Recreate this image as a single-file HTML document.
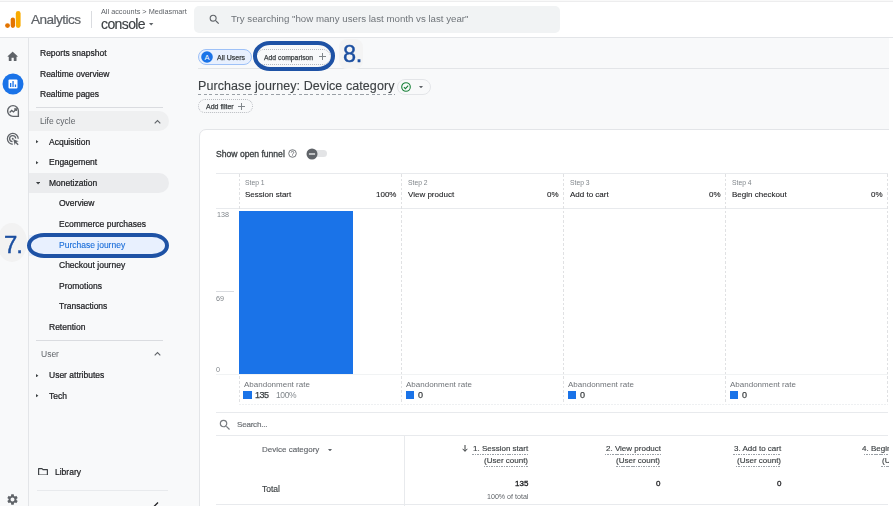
<!DOCTYPE html>
<html><head><meta charset="utf-8"><style>
html,body{margin:0;padding:0;width:893px;height:506px;overflow:hidden;background:#f8f9fa;font-family:"Liberation Sans",sans-serif;position:relative}
.t{position:absolute;white-space:nowrap;line-height:1;will-change:transform}
</style></head><body>
<div style="position:absolute;left:0px;top:0px;width:893px;height:1px;background:#f9f9f9"></div>
<div style="position:absolute;left:0px;top:1px;width:893px;height:1px;background:#ededee"></div>
<div style="position:absolute;left:0px;top:2px;width:893px;height:35px;background:#fff"></div>
<div style="position:absolute;left:0px;top:37px;width:893px;height:1px;background:#e3e5e8"></div>
<svg style="position:absolute;left:4px;top:10px" width="18" height="20" viewBox="0 0 18 20">
<circle cx="3.5" cy="15.6" r="2.4" fill="#e37400"/>
<rect x="6.7" y="7.4" width="4.3" height="10.6" rx="2.15" fill="#e37400"/>
<rect x="11.8" y="1" width="4.8" height="17" rx="2.4" fill="#f9ab00"/>
</svg>
<div class="t" style="left:31.20px;top:13.08px;font-size:13.6px;color:#5f6368;font-weight:400;letter-spacing:-0.55px;;-webkit-text-stroke:0.2px #5f6368">Analytics</div>
<div style="position:absolute;left:91px;top:11px;width:1px;height:17px;background:#dadce0"></div>
<div class="t" style="left:101.00px;top:8.32px;font-size:7.3px;color:#5f6368;font-weight:400;letter-spacing:0px;">All accounts &gt; Mediasmart</div>
<div class="t" style="left:101.00px;top:16.95px;font-size:14px;color:#3c4043;font-weight:400;letter-spacing:-0.6px;;-webkit-text-stroke:0.15px #3c4043">console</div>
<svg style="position:absolute;left:149.3px;top:23px" width="4.4" height="2.6" viewBox="0 0 6 3.5"><path d="M0 0h6L3 3.5z" fill="#5f6368"/></svg>
<div style="position:absolute;left:194px;top:6px;width:366px;height:27px;background:#f1f3f4;border-radius:5px"></div>
<svg style="position:absolute;left:208px;top:13px" width="13" height="13" viewBox="0 0 24 24">
<path d="M15.5 14h-.79l-.28-.27A6.47 6.47 0 0 0 16 9.5 6.5 6.5 0 1 0 9.5 16c1.61 0 3.09-.59 4.23-1.57l.27.28v.79l5 4.99L20.49 19l-4.99-5zm-6 0C7.01 14 5 11.99 5 9.5S7.01 5 9.5 5 14 7.01 14 9.5 11.99 14 9.5 14z" fill="#5f6368"/></svg>
<div class="t" style="left:231.00px;top:14.19px;font-size:9.7px;color:#6f7479;font-weight:400;letter-spacing:0px;">Try searching "how many users last month vs last year"</div>
<div style="position:absolute;left:28px;top:38px;width:1px;height:468px;background:#e3e5e8"></div>
<svg style="position:absolute;left:6.05px;top:50.1px" width="13.3" height="13.3" viewBox="0 0 24 24"><path d="M10 19v-5h4v5c0 .55.45 1 1 1h3c.55 0 1-.45 1-1v-7h1.7c.46 0 .68-.57.33-.87L12.67 3.6c-.38-.34-.96-.34-1.34 0l-8.36 7.53c-.34.3-.13.87.33.87H5v7c0 .55.45 1 1 1h3c.55 0 1-.45 1-1z" fill="#5f6368"/></svg>
<svg style="position:absolute;left:2px;top:73px" width="22" height="22" viewBox="0 0 22 22">
<circle cx="11" cy="11" r="10.5" fill="#1a73e8"/>
<rect x="6.5" y="6.5" width="9" height="9" rx="1" fill="#fff"/>
<rect x="8" y="10" width="1.3" height="4" fill="#1a73e8"/>
<rect x="10.4" y="8" width="1.3" height="6" fill="#1a73e8"/>
<rect x="12.8" y="11.5" width="1.3" height="2.5" fill="#1a73e8"/>
</svg>
<svg style="position:absolute;left:6px;top:104.3px" width="14" height="14" viewBox="0 0 24 24">
<path d="M12 2.8a9.2 9.2 0 1 0 0 18.4h9.2V12A9.2 9.2 0 0 0 12 2.8z" fill="none" stroke="#5f6368" stroke-width="2.4"/>
<path d="M6.2 14.6l3.6-3.6 3 2.6 4.6-4.6" fill="none" stroke="#5f6368" stroke-width="2.3"/>
<path d="M14 8.6h3.6v3.6" fill="none" stroke="#5f6368" stroke-width="2.3"/>
</svg>
<svg style="position:absolute;left:6px;top:131.5px" width="14" height="14" viewBox="0 0 24 24">
<path d="M21 11.5A9.3 9.3 0 1 0 11.5 21" fill="none" stroke="#5f6368" stroke-width="2.2"/>
<path d="M16.6 11.2A5.2 5.2 0 1 0 11.2 16.6" fill="none" stroke="#5f6368" stroke-width="2.2"/>
<circle cx="11.5" cy="11.5" r="1.6" fill="#5f6368"/>
<path d="M12.5 12.5l9.2 3.4-3.9 1.3 3.9 3.9-1.6 1.6-3.9-3.9-1.3 3.9z" fill="#5f6368"/>
</svg>
<svg style="position:absolute;left:6px;top:493px" width="13" height="13" viewBox="0 0 24 24">
<path d="M19.14 12.94c.04-.3.06-.61.06-.94 0-.32-.02-.64-.07-.94l2.03-1.58a.49.49 0 0 0 .12-.61l-1.92-3.32a.488.488 0 0 0-.59-.22l-2.39.96c-.5-.38-1.03-.7-1.62-.94l-.36-2.54a.484.484 0 0 0-.48-.41h-3.84c-.24 0-.43.17-.47.41l-.36 2.54c-.59.24-1.13.57-1.62.94l-2.39-.96c-.22-.08-.47 0-.59.22L2.74 8.87c-.12.21-.08.47.12.61l2.03 1.58c-.05.3-.09.63-.09.94s.02.64.07.94l-2.03 1.58a.49.49 0 0 0-.12.61l1.92 3.32c.12.22.37.29.59.22l2.39-.96c.5.38 1.03.7 1.62.94l.36 2.54c.05.24.24.41.48.41h3.84c.24 0 .44-.17.47-.41l.36-2.54c.59-.24 1.13-.56 1.62-.94l2.39.96c.22.08.47 0 .59-.22l1.92-3.32c.12-.22.07-.47-.12-.61l-2.01-1.58zM12 15.6c-1.98 0-3.6-1.62-3.6-3.6s1.62-3.6 3.6-3.6 3.6 1.62 3.6 3.6-1.62 3.6-3.6 3.6z" fill="#5f6368"/></svg>
<div class="t" style="left:40.40px;top:49.00px;font-size:8.5px;color:#202124;font-weight:400;letter-spacing:0px;;-webkit-text-stroke:0.22px #202124">Reports snapshot</div>
<div class="t" style="left:40.40px;top:69.80px;font-size:8.5px;color:#202124;font-weight:400;letter-spacing:0px;;-webkit-text-stroke:0.22px #202124">Realtime overview</div>
<div class="t" style="left:40.40px;top:90.10px;font-size:8.5px;color:#202124;font-weight:400;letter-spacing:0px;;-webkit-text-stroke:0.22px #202124">Realtime pages</div>
<div style="position:absolute;left:35.5px;top:107px;width:127px;height:1px;background:#dadce0"></div>
<div style="position:absolute;left:29px;top:110.7px;width:140px;height:20.8px;background:#eff0f1;border-radius:0 10.4px 10.4px 0"></div>
<div class="t" style="left:40.40px;top:116.80px;font-size:8.5px;color:#5f6368;font-weight:400;letter-spacing:0px;">Life cycle</div>
<svg style="position:absolute;left:154px;top:119px" width="7" height="5" viewBox="0 0 7 5"><path d="M0.7 4.3L3.5 1.5 6.3 4.3" fill="none" stroke="#5f6368" stroke-width="1.1"/></svg>
<svg style="position:absolute;left:36.3px;top:140.4px" width="2.4" height="3.4" viewBox="0 0 3 4"><path d="M0 0L3 2 0 4z" fill="#3c4043"/></svg>
<div class="t" style="left:49.40px;top:137.60px;font-size:8.5px;color:#202124;font-weight:400;letter-spacing:0px;;-webkit-text-stroke:0.22px #202124">Acquisition</div>
<svg style="position:absolute;left:36.3px;top:161.4px" width="2.4" height="3.4" viewBox="0 0 3 4"><path d="M0 0L3 2 0 4z" fill="#3c4043"/></svg>
<div class="t" style="left:49.40px;top:158.10px;font-size:8.5px;color:#202124;font-weight:400;letter-spacing:0px;;-webkit-text-stroke:0.22px #202124">Engagement</div>
<div style="position:absolute;left:29px;top:173px;width:140px;height:20.2px;background:#ebecee;border-radius:0 10.1px 10.1px 0"></div>
<svg style="position:absolute;left:35.9px;top:182.2px" width="4.2" height="2.5" viewBox="0 0 5 3"><path d="M0 0h5L2.5 3z" fill="#3c4043"/></svg>
<div class="t" style="left:49.40px;top:178.80px;font-size:8.5px;color:#202124;font-weight:400;letter-spacing:0px;;-webkit-text-stroke:0.22px #202124">Monetization</div>
<div class="t" style="left:58.50px;top:199.30px;font-size:8.5px;color:#202124;font-weight:400;letter-spacing:0px;;-webkit-text-stroke:0.22px #202124">Overview</div>
<div class="t" style="left:58.50px;top:220.10px;font-size:8.5px;color:#202124;font-weight:400;letter-spacing:0px;;-webkit-text-stroke:0.22px #202124">Ecommerce purchases</div>
<div style="position:absolute;left:29px;top:235px;width:139px;height:21px;background:#e8f0fe;border-radius:0 11px 11px 0"></div>
<div class="t" style="left:58.50px;top:240.70px;font-size:8.5px;color:#1a6dd9;font-weight:400;letter-spacing:0px;;-webkit-text-stroke:0.12px #1a6dd9">Purchase journey</div>
<div class="t" style="left:58.50px;top:261.00px;font-size:8.5px;color:#202124;font-weight:400;letter-spacing:0px;;-webkit-text-stroke:0.22px #202124">Checkout journey</div>
<div class="t" style="left:58.50px;top:281.60px;font-size:8.5px;color:#202124;font-weight:400;letter-spacing:0px;;-webkit-text-stroke:0.22px #202124">Promotions</div>
<div class="t" style="left:58.50px;top:302.40px;font-size:8.5px;color:#202124;font-weight:400;letter-spacing:0px;;-webkit-text-stroke:0.22px #202124">Transactions</div>
<div class="t" style="left:49.20px;top:323.10px;font-size:8.5px;color:#202124;font-weight:400;letter-spacing:0px;;-webkit-text-stroke:0.22px #202124">Retention</div>
<div style="position:absolute;left:35.5px;top:340px;width:127px;height:1px;background:#dadce0"></div>
<div class="t" style="left:40.50px;top:350.00px;font-size:8.5px;color:#5f6368;font-weight:400;letter-spacing:0px;">User</div>
<svg style="position:absolute;left:154px;top:351.3px" width="7" height="5" viewBox="0 0 7 5"><path d="M0.7 4.3L3.5 1.5 6.3 4.3" fill="none" stroke="#5f6368" stroke-width="1.1"/></svg>
<svg style="position:absolute;left:36.3px;top:373.9px" width="2.4" height="3.4" viewBox="0 0 3 4"><path d="M0 0L3 2 0 4z" fill="#3c4043"/></svg>
<div class="t" style="left:49.20px;top:370.80px;font-size:8.5px;color:#202124;font-weight:400;letter-spacing:0px;;-webkit-text-stroke:0.22px #202124">User attributes</div>
<svg style="position:absolute;left:36.3px;top:394.4px" width="2.4" height="3.4" viewBox="0 0 3 4"><path d="M0 0L3 2 0 4z" fill="#3c4043"/></svg>
<div class="t" style="left:49.20px;top:391.50px;font-size:8.5px;color:#202124;font-weight:400;letter-spacing:0px;;-webkit-text-stroke:0.22px #202124">Tech</div>
<svg style="position:absolute;left:38.2px;top:467.6px" width="10" height="7.6" viewBox="0 0 10 7.6"><path d="M0.6 0.6h3.4l1 1h4.4v5.4H0.6z" fill="none" stroke="#3c4043" stroke-width="1.15" stroke-linejoin="round"/></svg>
<div class="t" style="left:54.90px;top:468.20px;font-size:8.5px;color:#202124;font-weight:400;letter-spacing:0px;;-webkit-text-stroke:0.22px #202124">Library</div>
<div style="position:absolute;left:36.5px;top:490px;width:131px;height:1px;background:#e8eaed"></div>
<svg style="position:absolute;left:152.5px;top:501.5px" width="6" height="5" viewBox="0 0 6 5"><path d="M1 4.5L5 0.5" stroke="#202124" stroke-width="1.3"/></svg>
<div style="position:absolute;left:-3px;top:222.5px;width:30px;height:39.5px;background:#f2f2f2;border-radius:50%"></div>
<div class="t" style="left:4.20px;top:233.28px;font-size:24px;color:#1c4fa0;font-weight:400;letter-spacing:-1.2px;;-webkit-text-stroke:0.4px #1c4fa0">7.</div>
<div style="position:absolute;left:26.8px;top:233.3px;width:142.2px;height:25px;border:4px solid #1e52a5;border-radius:17px / 12.5px;box-sizing:border-box"></div>
<div style="position:absolute;left:888.5px;top:38px;width:4.5px;height:468px;background:#fff"></div>
<div style="position:absolute;left:198px;top:49.4px;width:54px;height:15.6px;background:#e8f0fe;border:1.2px solid #9ec1f7;border-radius:8px;box-sizing:border-box"></div>
<svg style="position:absolute;left:200.6px;top:51.4px" width="12" height="12" viewBox="0 0 12 12"><circle cx="6" cy="6" r="5.8" fill="#1a73e8"/><text x="6" y="8.6" font-family="Liberation Sans" font-size="7.5" fill="#fff" text-anchor="middle">A</text></svg>
<div class="t" style="left:216.90px;top:54.37px;font-size:7.0px;color:#3c4043;font-weight:400;letter-spacing:0px;;-webkit-text-stroke:0.25px #3c4043">All Users</div>
<div style="position:absolute;left:256px;top:49.4px;width:75px;height:15.6px;border:1px dotted #b8bbc0;border-radius:8px;box-sizing:border-box"></div>
<div class="t" style="left:264.40px;top:54.54px;font-size:6.8px;color:#3c4043;font-weight:400;letter-spacing:0px;;-webkit-text-stroke:0.25px #3c4043">Add comparison</div>
<svg style="position:absolute;left:319px;top:53px" width="7" height="7" viewBox="0 0 7 7"><path d="M3.5 0v7M0 3.5h7" stroke="#80868b" stroke-width="1"/></svg>
<div style="position:absolute;left:198px;top:68.3px;width:690.5px;height:1px;background:#e3e5e8"></div>
<div style="position:absolute;left:339px;top:39.4px;width:24.4px;height:30px;background:#f4f4f4;border-radius:8px"></div>
<div class="t" style="left:343.00px;top:42.70px;font-size:23.5px;color:#1c4fa0;font-weight:400;letter-spacing:-0.4px;;-webkit-text-stroke:0.4px #1c4fa0">8.</div>
<div style="position:absolute;left:252.9px;top:41.2px;width:82.6px;height:29.4px;border:4px solid #1e52a5;border-radius:17px / 14.7px;box-sizing:border-box"></div>
<div class="t" style="left:197.60px;top:80.02px;font-size:12.5px;color:#3c4043;font-weight:400;letter-spacing:0.08px;;-webkit-text-stroke:0.12px #3c4043">Purchase journey: Device category</div>
<div style="position:absolute;left:198px;top:93.9px;width:196.5px;height:1.3px;background:repeating-linear-gradient(90deg,#9aa0a6 0 3.2px,transparent 3.2px 5.6px)"></div>
<div style="position:absolute;left:397.2px;top:79.2px;width:34px;height:16.1px;border:1px solid #e3e5e8;border-radius:8px;box-sizing:border-box"></div>
<svg style="position:absolute;left:401px;top:82.2px" width="10" height="10" viewBox="0 0 10 10"><circle cx="5" cy="5" r="4.3" fill="none" stroke="#188038" stroke-width="1.1"/><path d="M2.9 5.1l1.5 1.5 2.8-2.9" fill="none" stroke="#188038" stroke-width="1.1"/></svg>
<svg style="position:absolute;left:419.3px;top:85.7px" width="4" height="2.4" viewBox="0 0 5 3"><path d="M0 0h5L2.5 3z" fill="#5f6368"/></svg>
<div style="position:absolute;left:198px;top:99px;width:55px;height:14.4px;border:1px dotted #b8bbc0;border-radius:7px;box-sizing:border-box"></div>
<div class="t" style="left:205.80px;top:103.37px;font-size:7.0px;color:#3c4043;font-weight:400;letter-spacing:0px;;-webkit-text-stroke:0.25px #3c4043">Add filter</div>
<svg style="position:absolute;left:238px;top:102.7px" width="7" height="7" viewBox="0 0 7 7"><path d="M3.5 0v7M0 3.5h7" stroke="#80868b" stroke-width="1"/></svg>
<div style="position:absolute;left:198.5px;top:129px;width:720px;height:400px;background:#fff;border:1px solid #e3e5e8;border-radius:7px;box-sizing:border-box"></div>
<div style="position:absolute;left:888.5px;top:129px;width:4.5px;height:377px;background:#fff"></div>
<div class="t" style="left:216.30px;top:149.52px;font-size:8.6px;color:#3c4043;font-weight:400;letter-spacing:0px;;-webkit-text-stroke:0.3px #3c4043">Show open funnel</div>
<svg style="position:absolute;left:288px;top:149px" width="9" height="9" viewBox="0 0 9 9"><circle cx="4.5" cy="4.5" r="3.8" fill="none" stroke="#5f6368" stroke-width="0.85"/><path d="M3.2 3.6a1.3 1.3 0 1 1 1.9 1.1c-.45.25-.6.5-.6 1" fill="none" stroke="#5f6368" stroke-width="0.8"/><circle cx="4.5" cy="6.5" r="0.45" fill="#5f6368"/></svg>
<div style="position:absolute;left:312.3px;top:150.2px;width:14.5px;height:7.1px;background:#e3e4e6;border-radius:3.6px"></div>
<svg style="position:absolute;left:306.3px;top:147.8px" width="12" height="12" viewBox="0 0 12 12"><circle cx="6" cy="6" r="5.5" fill="#5f6368"/><path d="M2.9 6h6.2" stroke="#fff" stroke-width="1.2"/></svg>
<div style="position:absolute;left:216.3px;top:173.2px;width:672.2px;height:1px;background:#e8eaed"></div>
<div style="position:absolute;left:216.3px;top:207.6px;width:672.2px;height:1px;background:#e8eaed"></div>
<div style="position:absolute;left:238.5px;top:174px;width:1px;height:230px;background:repeating-linear-gradient(180deg,#e0e1e3 0 2.6px,transparent 2.6px 4.6px)"></div>
<div style="position:absolute;left:401.0px;top:174px;width:1px;height:230px;background:repeating-linear-gradient(180deg,#e0e1e3 0 2.6px,transparent 2.6px 4.6px)"></div>
<div style="position:absolute;left:563.0px;top:174px;width:1px;height:230px;background:repeating-linear-gradient(180deg,#e0e1e3 0 2.6px,transparent 2.6px 4.6px)"></div>
<div style="position:absolute;left:725.2px;top:174px;width:1px;height:230px;background:repeating-linear-gradient(180deg,#e0e1e3 0 2.6px,transparent 2.6px 4.6px)"></div>
<div style="position:absolute;left:887.3px;top:174px;width:1px;height:230px;background:repeating-linear-gradient(180deg,#e0e1e3 0 2.6px,transparent 2.6px 4.6px)"></div>
<div class="t" style="left:245.00px;top:179.84px;font-size:6.8px;color:#80868b;font-weight:400;letter-spacing:0px;">Step 1</div>
<div class="t" style="left:245.00px;top:190.73px;font-size:8px;color:#202124;font-weight:400;letter-spacing:0px;;-webkit-text-stroke:0.1px #202124">Session start</div>
<div class="t" style="right:496.60px;top:190.73px;font-size:8px;color:#202124;font-weight:400;letter-spacing:0px;;-webkit-text-stroke:0.1px #202124">100%</div>
<div class="t" style="left:407.50px;top:179.84px;font-size:6.8px;color:#80868b;font-weight:400;letter-spacing:0px;">Step 2</div>
<div class="t" style="left:407.50px;top:190.73px;font-size:8px;color:#202124;font-weight:400;letter-spacing:0px;;-webkit-text-stroke:0.1px #202124">View product</div>
<div class="t" style="right:334.60px;top:190.73px;font-size:8px;color:#202124;font-weight:400;letter-spacing:0px;;-webkit-text-stroke:0.1px #202124">0%</div>
<div class="t" style="left:569.50px;top:179.84px;font-size:6.8px;color:#80868b;font-weight:400;letter-spacing:0px;">Step 3</div>
<div class="t" style="left:569.50px;top:190.73px;font-size:8px;color:#202124;font-weight:400;letter-spacing:0px;;-webkit-text-stroke:0.1px #202124">Add to cart</div>
<div class="t" style="right:172.40px;top:190.73px;font-size:8px;color:#202124;font-weight:400;letter-spacing:0px;;-webkit-text-stroke:0.1px #202124">0%</div>
<div class="t" style="left:731.70px;top:179.84px;font-size:6.8px;color:#80868b;font-weight:400;letter-spacing:0px;">Step 4</div>
<div class="t" style="left:731.70px;top:190.73px;font-size:8px;color:#202124;font-weight:400;letter-spacing:0px;;-webkit-text-stroke:0.1px #202124">Begin checkout</div>
<div class="t" style="right:10.30px;top:190.73px;font-size:8px;color:#202124;font-weight:400;letter-spacing:0px;;-webkit-text-stroke:0.1px #202124">0%</div>
<div class="t" style="left:216.50px;top:210.90px;font-size:7.2px;color:#80868b;font-weight:400;letter-spacing:0px;">138</div>
<div style="position:absolute;left:216.3px;top:290.8px;width:17.5px;height:1px;background:#dadce0"></div>
<div class="t" style="left:216.30px;top:294.70px;font-size:7.2px;color:#80868b;font-weight:400;letter-spacing:0px;">69</div>
<div class="t" style="left:216.30px;top:366.30px;font-size:7.2px;color:#80868b;font-weight:400;letter-spacing:0px;">0</div>
<div style="position:absolute;left:216.3px;top:373.6px;width:672.2px;height:1px;background:#f1f3f4"></div>
<div style="position:absolute;left:239.2px;top:211.0px;width:113.5px;height:163.2px;background:#1a73e8"></div>
<div class="t" style="left:243.50px;top:380.63px;font-size:8px;color:#6f7378;font-weight:400;letter-spacing:0px;">Abandonment rate</div>
<div style="position:absolute;left:243.2px;top:390.7px;width:8.5px;height:8.3px;background:#1a73e8"></div>
<div class="t" style="left:255.30px;top:390.68px;font-size:9px;color:#3c4043;font-weight:400;letter-spacing:-0.5px;;-webkit-text-stroke:0.25px #3c4043">135</div>
<div class="t" style="left:275.70px;top:391.10px;font-size:8.5px;color:#80868b;font-weight:400;letter-spacing:-0.4px;">100%</div>
<div class="t" style="left:406.00px;top:380.63px;font-size:8px;color:#6f7378;font-weight:400;letter-spacing:0px;">Abandonment rate</div>
<div style="position:absolute;left:405.7px;top:390.7px;width:8.5px;height:8.3px;background:#1a73e8"></div>
<div class="t" style="left:417.80px;top:390.68px;font-size:9px;color:#3c4043;font-weight:400;letter-spacing:-0.5px;;-webkit-text-stroke:0.25px #3c4043">0</div>
<div class="t" style="left:568.00px;top:380.63px;font-size:8px;color:#6f7378;font-weight:400;letter-spacing:0px;">Abandonment rate</div>
<div style="position:absolute;left:567.7px;top:390.7px;width:8.5px;height:8.3px;background:#1a73e8"></div>
<div class="t" style="left:579.80px;top:390.68px;font-size:9px;color:#3c4043;font-weight:400;letter-spacing:-0.5px;;-webkit-text-stroke:0.25px #3c4043">0</div>
<div class="t" style="left:730.20px;top:380.63px;font-size:8px;color:#6f7378;font-weight:400;letter-spacing:0px;">Abandonment rate</div>
<div style="position:absolute;left:729.9000000000001px;top:390.7px;width:8.5px;height:8.3px;background:#1a73e8"></div>
<div class="t" style="left:742.00px;top:390.68px;font-size:9px;color:#3c4043;font-weight:400;letter-spacing:-0.5px;;-webkit-text-stroke:0.25px #3c4043">0</div>
<div style="position:absolute;left:239.2px;top:403.5px;width:648.5px;height:1px;background:repeating-linear-gradient(90deg,#eef0f2 0 2px,transparent 2px 3px)"></div>
<div style="position:absolute;left:216.3px;top:412.2px;width:672.2px;height:1px;background:#e8eaed"></div>
<svg style="position:absolute;left:217.5px;top:417.6px" width="14" height="14" viewBox="0 0 24 24"><path d="M15.5 14h-.79l-.28-.27A6.47 6.47 0 0 0 16 9.5 6.5 6.5 0 1 0 9.5 16c1.61 0 3.09-.59 4.23-1.57l.27.28v.79l5 4.99L20.49 19l-4.99-5zm-6 0C7.01 14 5 11.99 5 9.5S7.01 5 9.5 5 14 7.01 14 9.5 11.99 14 9.5 14z" fill="#777b80"/></svg>
<div class="t" style="left:236.80px;top:421.03px;font-size:8px;color:#6f7378;font-weight:400;letter-spacing:-0.2px;;-webkit-text-stroke:0.2px #6f7378">Search...</div>
<div style="position:absolute;left:216.3px;top:435.0px;width:672.2px;height:1px;background:#e8eaed"></div>
<div class="t" style="left:262.30px;top:446.43px;font-size:8px;color:#5f6368;font-weight:400;letter-spacing:0px;;-webkit-text-stroke:0.12px #5f6368">Device category</div>
<svg style="position:absolute;left:328.4px;top:448.8px" width="4" height="2.4" viewBox="0 0 5 3"><path d="M0 0h5L2.5 3z" fill="#5f6368"/></svg>
<div style="position:absolute;left:404px;top:436px;width:1px;height:70px;background:#e8eaed"></div>
<div class="t" style="left:262.00px;top:485.20px;font-size:8.5px;color:#3c4043;font-weight:400;letter-spacing:0px;;-webkit-text-stroke:0.15px #3c4043">Total</div>
<div style="position:absolute;left:216.3px;top:504.3px;width:672.2px;height:1px;background:#e8eaed"></div>
<svg style="position:absolute;left:462px;top:445px" width="6" height="7" viewBox="0 0 6 7"><path d="M3 0v6.2M0.6 3.8L3 6.3 5.4 3.8" fill="none" stroke="#3c4043" stroke-width="1"/></svg>
<div class="t" style="right:364.70px;top:444.83px;font-size:8px;color:#3c4043;font-weight:400;letter-spacing:0px;;-webkit-text-stroke:0.15px #3c4043">1. Session start</div>
<div class="t" style="right:364.70px;top:457.13px;font-size:8px;color:#3c4043;font-weight:400;letter-spacing:0px;;-webkit-text-stroke:0.15px #3c4043">(User count)</div>
<div style="position:absolute;left:472.29999999999995px;top:453.8px;width:56px;height:1px;background:repeating-linear-gradient(90deg,#9aa0a6 0 1.5px,transparent 1.5px 2.5px)"></div>
<div style="position:absolute;left:483.69999999999993px;top:466.0px;width:44.6px;height:1px;background:repeating-linear-gradient(90deg,#9aa0a6 0 1.5px,transparent 1.5px 2.5px)"></div>
<div class="t" style="right:232.50px;top:444.83px;font-size:8px;color:#3c4043;font-weight:400;letter-spacing:0px;;-webkit-text-stroke:0.15px #3c4043">2. View product</div>
<div class="t" style="right:232.50px;top:457.13px;font-size:8px;color:#3c4043;font-weight:400;letter-spacing:0px;;-webkit-text-stroke:0.15px #3c4043">(User count)</div>
<div style="position:absolute;left:604.5px;top:453.8px;width:56px;height:1px;background:repeating-linear-gradient(90deg,#9aa0a6 0 1.5px,transparent 1.5px 2.5px)"></div>
<div style="position:absolute;left:615.9px;top:466.0px;width:44.6px;height:1px;background:repeating-linear-gradient(90deg,#9aa0a6 0 1.5px,transparent 1.5px 2.5px)"></div>
<div class="t" style="right:112.00px;top:444.83px;font-size:8px;color:#3c4043;font-weight:400;letter-spacing:0px;;-webkit-text-stroke:0.15px #3c4043">3. Add to cart</div>
<div class="t" style="right:112.00px;top:457.13px;font-size:8px;color:#3c4043;font-weight:400;letter-spacing:0px;;-webkit-text-stroke:0.15px #3c4043">(User count)</div>
<div style="position:absolute;left:733px;top:453.8px;width:48px;height:1px;background:repeating-linear-gradient(90deg,#9aa0a6 0 1.5px,transparent 1.5px 2.5px)"></div>
<div style="position:absolute;left:736.4px;top:466.0px;width:44.6px;height:1px;background:repeating-linear-gradient(90deg,#9aa0a6 0 1.5px,transparent 1.5px 2.5px)"></div>
<div class="t" style="right:-33.00px;top:444.83px;font-size:8px;color:#3c4043;font-weight:400;letter-spacing:0px;;-webkit-text-stroke:0.15px #3c4043">4. Begin checkout</div>
<div class="t" style="right:-33.00px;top:457.13px;font-size:8px;color:#3c4043;font-weight:400;letter-spacing:0px;;-webkit-text-stroke:0.15px #3c4043">(User count)</div>
<div style="position:absolute;left:864px;top:453.8px;width:62px;height:1px;background:repeating-linear-gradient(90deg,#9aa0a6 0 1.5px,transparent 1.5px 2.5px)"></div>
<div style="position:absolute;left:881.4px;top:466.0px;width:44.6px;height:1px;background:repeating-linear-gradient(90deg,#9aa0a6 0 1.5px,transparent 1.5px 2.5px)"></div>
<div class="t" style="right:365.00px;top:480.03px;font-size:8px;color:#202124;font-weight:400;letter-spacing:0px;;-webkit-text-stroke:0.3px #202124">135</div>
<div class="t" style="right:365.00px;top:493.59px;font-size:7.1px;color:#5f6368;font-weight:400;letter-spacing:0px;">100% of total</div>
<div class="t" style="right:232.50px;top:480.03px;font-size:8px;color:#202124;font-weight:400;letter-spacing:0px;;-webkit-text-stroke:0.3px #202124">0</div>
<div class="t" style="right:112.00px;top:480.03px;font-size:8px;color:#202124;font-weight:400;letter-spacing:0px;;-webkit-text-stroke:0.3px #202124">0</div>
<div style="position:absolute;left:888.5px;top:38px;width:4.5px;height:468px;background:#fff"></div>
</body></html>
